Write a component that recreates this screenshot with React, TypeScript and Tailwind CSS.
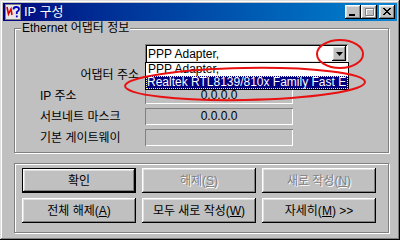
import React from "react";

const raised =
  "shadow-[inset_-1px_-1px_#000,inset_1px_1px_#fff,inset_-2px_-2px_#808080,inset_2px_2px_#dfdfdf]";

function Btn({
  children,
  disabled,
  def,
}: {
  children: React.ReactNode;
  disabled?: boolean;
  def?: boolean;
}) {
  return (
    <div
      className={
        "h-[25px] bg-[#c0c0c0] " + (def ? "border border-black " : "")
      }
    >
      <div
        className={
          "flex h-full w-full items-center justify-center " +
          raised +
          (disabled ? " text-[#808080] [text-shadow:1px_1px_0_#fff]" : " text-black")
        }
      >
        {children}
      </div>
    </div>
  );
}

function Field({ text }: { text: string }) {
  return (
    <div className="flex h-[17px] w-[148px] items-center justify-center bg-[#c0c0c0] shadow-[inset_1px_1px_#808080,inset_-1px_-1px_#fff] leading-[15px]">
      {text}
    </div>
  );
}

function Row({
  label,
  right,
  text,
}: {
  label: string;
  right?: boolean;
  text: string;
}) {
  return (
    <div className="flex h-[17px] items-center">
      <div
        className={
          "ml-[25px] w-[105px] whitespace-nowrap leading-[14px] " +
          (right ? "pr-[6px] text-right" : "")
        }
      >
        {label}
      </div>
      <Field text={text} />
    </div>
  );
}

export default function App() {
  return (
    <div className="relative h-[240px] w-[400px] overflow-hidden bg-[#c0c0c0] p-[3px] font-['Liberation_Sans','Noto_Sans_CJK_KR',sans-serif] text-[12px] text-black shadow-[inset_-1px_-1px_#000,inset_1px_1px_#dfdfdf,inset_-2px_-2px_#808080,inset_2px_2px_#fff]">
      {/* Title bar */}
      <div className="flex h-[18px] items-center bg-gradient-to-r from-[#000080] to-[#1084d0] pl-[2px] pr-[2px]">
        <svg width="16" height="16" viewBox="0 0 16 16" className="shrink-0">
          <rect x="0.5" y="0.5" width="15" height="15" fill="#e8e8e8" stroke="#808080" />
          <path d="M2 3 L3.5 10 L6 5 L7 11" fill="none" stroke="#e00000" strokeWidth="1.6" />
          <path
            d="M8.5 5.5 Q8.5 3 11.2 3 Q14 3 14 5.3 Q14 7 11.8 8 L11.8 10"
            fill="none"
            stroke="#0000c0"
            strokeWidth="1.8"
          />
          <rect x="10.9" y="11.5" width="1.8" height="1.8" fill="#0000c0" />
        </svg>
        <span className="ml-[3px] text-[13px] leading-[16px] text-white">IP 구성</span>
        <div className="flex-1" />
        <div className="flex items-center">
          <div className={"flex h-[14px] w-[16px] items-center justify-center bg-[#c0c0c0] " + raised}>
            <svg width="16" height="14" viewBox="0 0 16 14">
              <rect x="4" y="9" width="6" height="2" fill="#000" />
            </svg>
          </div>
          <div className={"flex h-[14px] w-[16px] items-center justify-center bg-[#c0c0c0] " + raised}>
            <svg width="16" height="14" viewBox="0 0 16 14">
              <path d="M4.5 3.5 h8 v7 h-8 z" fill="none" stroke="#fff" transform="translate(1 1)" />
              <rect x="4" y="3" width="9" height="1" fill="#fff" transform="translate(1 1)" />
              <path d="M4.5 3.5 h8 v7 h-8 z" fill="none" stroke="#808080" />
              <rect x="4" y="3" width="9" height="1" fill="#808080" />
            </svg>
          </div>
          <div className={"ml-[2px] flex h-[14px] w-[16px] items-center justify-center bg-[#c0c0c0] " + raised}>
            <svg width="16" height="14" viewBox="0 0 16 14">
              <path d="M4 3 L11 10 M11 3 L4 10 M5 3 L12 10 M12 3 L5 10" stroke="#000" strokeWidth="1" />
            </svg>
          </div>
        </div>
      </div>

      {/* Group 1 */}
      <div className="relative ml-[11px] mt-[7px] h-[125px] w-[375px] border border-[#808080] shadow-[1px_1px_0_#fff,inset_1px_1px_0_#fff]">
        <div className="-mt-[8px] ml-[6px] w-fit bg-[#c0c0c0] px-[1px] leading-[14px]">
          Ethernet 어댑터 정보
        </div>

        {/* combo */}
        <div className="ml-[130px] mt-[9px] flex h-[19px] w-[203px] items-center bg-white pl-[3px] pr-[2px] shadow-[inset_1px_1px_#808080,inset_-1px_-1px_#fff,inset_2px_2px_#000,inset_-2px_-2px_#dfdfdf]">
          <span className="flex-1 whitespace-nowrap leading-[14px]">PPP Adapter,</span>
          <div className={"flex h-[15px] w-[14px] items-center justify-center bg-[#c0c0c0] " + raised}>
            <svg width="7" height="4" viewBox="0 0 7 4">
              <path d="M0 0 H7 L3.5 4 Z" fill="#000" />
            </svg>
          </div>
        </div>

        <div className="mt-[3px] flex flex-col gap-[4px]">
          <Row label="어댑터 주소" right text="" />
          <Row label="IP 주소" text="0.0.0.0" />
          <Row label="서브네트 마스크" text="0.0.0.0" />
          <Row label="기본 게이트웨이" text="" />
        </div>

        {/* dropdown list overlay */}
        <div className="absolute left-[130px] top-[33px] h-[28px] w-[204px] overflow-hidden border border-black bg-white">
          <div className="h-[13px] whitespace-nowrap pl-[2px] leading-[13px]">PPP Adapter,</div>
          <div className="h-[13px] whitespace-nowrap bg-[#000080] pl-[1px] leading-[12px] text-white outline-1 -outline-offset-1 outline-dotted outline-[#ffff80]">
            Realtek RTL8139/810x Family Fast E
          </div>
        </div>
      </div>

      {/* Group 2 */}
      <div className="ml-[11px] mt-[10px] h-[70px] w-[375px] border border-[#808080] shadow-[1px_1px_0_#fff,inset_1px_1px_0_#fff]">
        <div className="ml-[7px] mt-[4px] grid grid-cols-[114px_114px_114px] gap-x-[6px] gap-y-[5px]">
          <Btn def>확인</Btn>
          <Btn disabled>
            해제(<span className="underline">S</span>)
          </Btn>
          <Btn disabled>
            새로 작성(<span className="underline">N</span>)
          </Btn>
          <Btn>
            전체 해제(<span className="underline">A</span>)
          </Btn>
          <Btn>
            모두 새로 작성(<span className="underline">W</span>)
          </Btn>
          <Btn>
            자세히(<span className="underline">M</span>) &gt;&gt;
          </Btn>
        </div>
      </div>

      {/* red annotation ellipses */}
      <svg
        className="pointer-events-none absolute left-0 top-0"
        width="400"
        height="240"
        viewBox="0 0 400 240"
      >
        <ellipse cx="340" cy="54" rx="23" ry="14" fill="none" stroke="#e81010" strokeWidth="2" />
        <ellipse
          cx="245"
          cy="84"
          rx="120"
          ry="16"
          fill="none"
          stroke="#e81010"
          strokeWidth="2"
          transform="rotate(-1 245 84)"
        />
      </svg>
    </div>
  );
}
